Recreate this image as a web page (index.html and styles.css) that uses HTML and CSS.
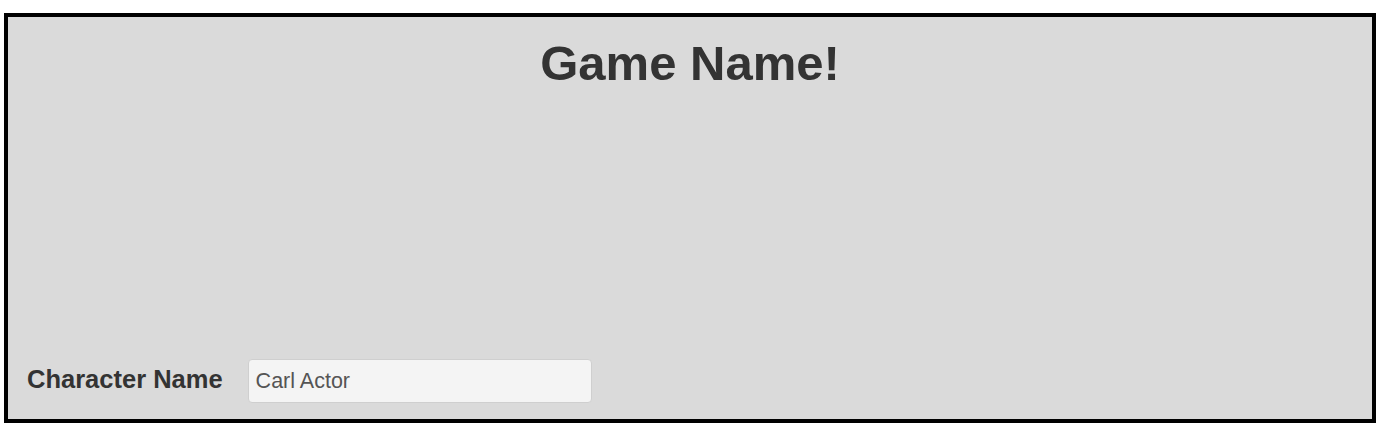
FILE: index.html
```html
<!DOCTYPE html>
<html lang="en">
<head>
<meta charset="utf-8">
<title>Game Name!</title>
<link rel="stylesheet" href="styles.css">
</head>
<body>
  <div class="game-box">
    <h1 class="game-title">Game Name!</h1>
    <form class="char-form">
      <label class="char-label" for="charName">Character Name</label>
      <input class="char-input" id="charName" type="text" value="Carl Actor">
    </form>
  </div>
</body>
</html>
```

FILE: styles.css
```css
html, body {
  margin: 0;
  padding: 0;
  background: #ffffff;
}

body {
  padding: 13px 20px 7px 4px;
  font-family: "Liberation Sans", Arial, Helvetica, sans-serif;
  color: #333333;
}

.game-box {
  box-sizing: border-box;
  height: 410px;
  border: 4px solid #000000;
  background: #dadada;
  display: flex;
  flex-direction: column;
}

.game-title {
  margin: 19px 0 0 0;
  font-size: 49px;
  line-height: 54px;
  font-weight: bold;
  text-align: center;
  color: #333333;
}

.char-form {
  margin: auto 0 0 0;
  padding: 0 0 16px 19px;
  display: flex;
  align-items: center;
  gap: 25px;
}

.char-label {
  font-size: 25.5px;
  font-weight: bold;
  line-height: 29px;
  color: #333333;
  margin-top: -4px;
}

.char-input {
  box-sizing: border-box;
  width: 344px;
  height: 44px;
  padding: 0 7px;
  margin: 0;
  border: 1px solid #cfcfcf;
  border-radius: 4px;
  background: #f4f4f4;
  font-family: "Liberation Sans", Arial, Helvetica, sans-serif;
  font-size: 21.5px;
  color: #555555;
  outline: none;
}
```
